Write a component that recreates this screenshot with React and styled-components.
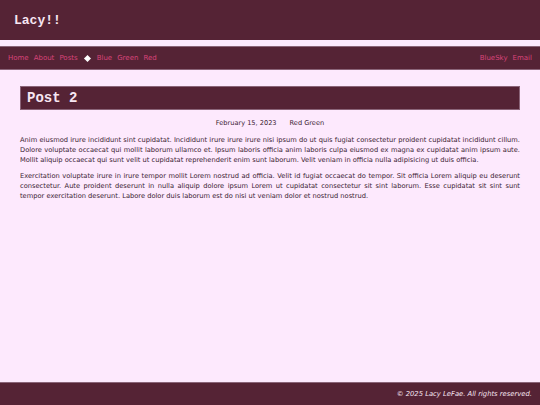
import React from 'react'
import styled, { createGlobalStyle } from 'styled-components'

const GlobalStyle = createGlobalStyle`
  html, body {
    margin: 0;
    padding: 0;
    background: #fde9fd;
  }
  body {
    font-family: 'DejaVu Sans', 'Open Sans', sans-serif;
    color: #3b2232;
  }
`

const Page = styled.div`
  min-height: 405px;
  display: flex;
  flex-direction: column;
`

const Header = styled.header`
  height: 40px;
  background: #552335;
  display: flex;
  align-items: center;
  padding: 0 14px;
`

const SiteTitle = styled.h1`
  margin: 0;
  font-family: 'Liberation Mono', 'DejaVu Sans Mono', monospace;
  font-weight: 700;
  font-size: 13px;
  color: #f7e6f2;
`

const Nav = styled.nav`
  margin-top: 6px;
  height: 22px;
  background: #552335;
  border-top: 1px solid #8a6478;
  border-bottom: 1px solid #8a6478;
  display: flex;
  align-items: center;
  justify-content: space-between;
  padding: 0 8px;
`

const NavGroup = styled.div`
  display: flex;
  align-items: center;
  gap: 5px;
`

const NavLink = styled.a`
  font-size: 7px;
  color: #d8437a;
  text-decoration: none;
`

const Diamond = styled.span`
  width: 5px;
  height: 5px;
  background: #fff;
  transform: rotate(45deg);
  margin: 0 2px;
`

const Main = styled.main`
  flex: 1;
  padding: 16px 20px 0;
`

const PostTitle = styled.h2`
  margin: 0;
  height: 22px;
  background: #552335;
  border: 1px solid #8a6478;
  display: flex;
  align-items: center;
  padding: 0 6px;
  font-family: 'Liberation Mono', 'DejaVu Sans Mono', monospace;
  font-weight: 700;
  font-size: 14px;
  color: #f7e6f2;
`

const Meta = styled.div`
  display: flex;
  justify-content: center;
  gap: 13px;
  margin-top: 9px;
  font-size: 6.6px;
  color: #3b2232;
`

const Para = styled.p`
  margin: 8px 0 0;
  font-size: 6.7px;
  line-height: 10px;
  text-align: justify;
  color: #3b2232;
  & + & {
    margin-top: 6px;
  }
`

const Footer = styled.footer`
  height: 22px;
  background: #552335;
  border-top: 1px solid #8a6478;
  display: flex;
  align-items: center;
  justify-content: flex-end;
  padding: 0 8px;
  font-size: 6.8px;
  font-style: italic;
  color: #f7e6f2;
`

export default function App() {
  return (
    <Page>
      <GlobalStyle />
      <Header>
        <SiteTitle>Lacy!!</SiteTitle>
      </Header>
      <Nav>
        <NavGroup>
          <NavLink href="#">Home</NavLink>
          <NavLink href="#">About</NavLink>
          <NavLink href="#">Posts</NavLink>
          <Diamond />
          <NavLink href="#">Blue</NavLink>
          <NavLink href="#">Green</NavLink>
          <NavLink href="#">Red</NavLink>
        </NavGroup>
        <NavGroup>
          <NavLink href="#">BlueSky</NavLink>
          <NavLink href="#">Email</NavLink>
        </NavGroup>
      </Nav>
      <Main>
        <PostTitle>Post 2</PostTitle>
        <Meta>
          <span>February 15, 2023</span>
          <span>Red Green</span>
        </Meta>
        <Para>
          Anim eiusmod irure incididunt sint cupidatat. Incididunt irure irure irure nisi ipsum do ut quis fugiat consectetur proident cupidatat incididunt cillum. Dolore voluptate occaecat qui mollit laborum ullamco et. Ipsum laboris officia anim laboris culpa eiusmod ex magna ex cupidatat anim ipsum aute. Mollit aliquip occaecat qui sunt velit ut cupidatat reprehenderit enim sunt laborum. Velit veniam in officia nulla adipisicing ut duis officia.
        </Para>
        <Para>
          Exercitation voluptate irure in irure tempor mollit Lorem nostrud ad officia. Velit id fugiat occaecat do tempor. Sit officia Lorem aliquip eu deserunt consectetur. Aute proident deserunt in nulla aliquip dolore ipsum Lorem ut cupidatat consectetur sit sint laborum. Esse cupidatat sit sint sunt tempor exercitation deserunt. Labore dolor duis laborum est do nisi ut veniam dolor et nostrud nostrud.
        </Para>
      </Main>
      <Footer>© 2025 Lacy LeFae. All rights reserved.</Footer>
    </Page>
  )
}
